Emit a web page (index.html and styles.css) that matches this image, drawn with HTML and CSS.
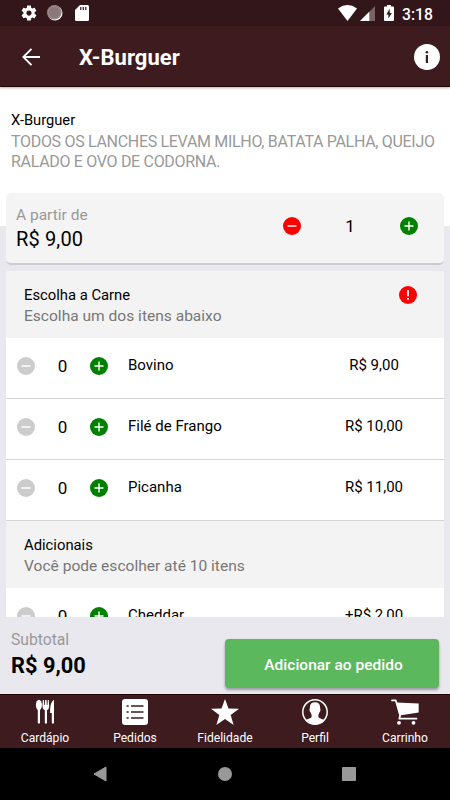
FILE: index.html
```
<!DOCTYPE html>
<html lang="pt-BR">
<head>
<meta charset="utf-8">
<meta name="viewport" content="width=device-width, initial-scale=1">
<title>X-Burguer</title>
<link rel="stylesheet" href="styles.css">
</head>
<body>
<svg class="defs" width="0" height="0" aria-hidden="true">
  <symbol id="minus" viewBox="0 0 18 18"><circle cx="9" cy="9" r="9" fill="currentColor"/><path d="M4.500 9h9" stroke="#fff" stroke-width="1.400"/></symbol>
  <symbol id="plus" viewBox="0 0 18 18"><circle cx="9" cy="9" r="9" fill="currentColor"/><path d="M4.500 9h9M9 4.500v9" stroke="#fff" stroke-width="1.400"/></symbol>
</svg>
<div class="app">
  <div class="status">
    <svg class="gear" width="18" height="18" viewBox="0 0 24 24" fill="#fff"><path d="M19.430 12.980c.04-.32.07-.64.07-.98s-.03-.66-.07-.98l2.110-1.650c.19-.15.24-.42.12-.64l-2-3.460c-.12-.22-.39-.3-.61-.22l-2.490 1c-.52-.4-1.080-.73-1.690-.98l-.38-2.650C14.460 2.180 14.250 2 14 2h-4c-.25 0-.46.18-.49.42l-.38 2.650c-.61.25-1.170.59-1.690.98l-2.490-1c-.23-.09-.49 0-.61.22l-2 3.460c-.13.22-.07.49.12.64l2.110 1.650c-.04.32-.07.65-.07.98s.03.66.07.98l-2.110 1.650c-.19.15-.24.42-.12.64l2 3.460c.12.22.39.3.61.22l2.490-1c.52.4 1.080.73 1.690.98l.38 2.650c.03.24.24.42.49.42h4c.25 0 .46-.18.49-.42l.38-2.650c.61-.25 1.170-.59 1.690-.98l2.490 1c.23.09.49 0 .61-.22l2-3.460c.12-.22.07-.49-.12-.64l-2.110-1.650zM12 15.500c-1.930 0-3.500-1.570-3.500-3.500s1.570-3.500 3.500-3.500 3.500 1.570 3.500 3.500-1.570 3.500-3.500 3.500z"/></svg>
    <svg class="sync" width="16" height="16" viewBox="0 0 16 16"><circle cx="8" cy="8" r="7.500" fill="#fff"/><circle cx="7.300" cy="7.300" r="7.300" fill="#8a7779"/><circle cx="7.300" cy="7.300" r="6" fill="none" stroke="#b3a7a8" stroke-width="1" stroke-dasharray="1 1"/></svg>
    <svg class="sd" width="14" height="16" viewBox="0 0 14 16"><path d="M5 0h7.500Q14 0 14 1.500v13Q14 16 12.500 16h-11Q0 16 0 14.500V5z" fill="#fff"/><path d="M5.800 2v3M8.300 2v3M10.800 2v3" stroke="#331619" stroke-width="1.200"/></svg>
    <span class="grow"></span>
    <svg class="wifi" width="19" height="16" viewBox="0 0 19 16"><path d="M0 3.400Q9.500-3.400 19 3.400L9.500 16z" fill="#fff"/></svg>
    <svg class="signal" width="15" height="15" viewBox="0 0 15 15"><path d="M0 15L15 0v15z" fill="#7a6164"/><path d="M0 15L9.300 5.700V15z" fill="#fff"/></svg>
    <svg class="battery" width="10" height="16" viewBox="0 0 10 16"><path d="M3 0h4v1.500h2q1 0 1 1V15q0 1-1 1H1q-1 0-1-1V2.500q0-1 1-1h2z" fill="#fff"/><path d="M5.700 3.800L2.300 9.500h2.100v4L7.800 8H5.700z" fill="#331619"/></svg>
    <span class="clock">3:18</span>
  </div>
  <header class="bar">
    <svg class="back" width="18" height="18" viewBox="0 0 18 18" fill="none" stroke="#fff" stroke-width="1.900"><path d="M18 9H1.500M9.500.8L1.300 9l8.200 8.200"/></svg>
    <h1>X-Burguer</h1>
    <svg class="info" width="26" height="26" viewBox="0 0 26 26"><circle cx="13" cy="13" r="13" fill="#fff"/><path d="M12.900 11v8" stroke="#3d1b1f" stroke-width="2.200"/><circle cx="12.900" cy="8.300" r="1.300" fill="#3d1b1f"/></svg>
  </header>
  <main class="scroll">
    <section class="intro">
      <h2>X-Burguer</h2>
      <p>TODOS OS LANCHES LEVAM MILHO, BATATA PALHA, QUEIJO RALADO E OVO DE CODORNA.</p>
    </section>
    <section class="price-card">
      <div><div class="from">A partir de</div><div class="price">R$ 9,00</div></div>
      <div class="stepper main-stepper"><svg class="ic red"><use href="#minus"/></svg><span>1</span><svg class="ic green"><use href="#plus"/></svg></div>
    </section>
    <section class="options">
      <div class="group first">
        <div><h3>Escolha a Carne</h3><p>Escolha um dos itens abaixo</p></div>
        <svg class="alert" width="18" height="18" viewBox="0 0 18 18"><circle cx="9" cy="9" r="9" fill="#f00"/><path d="M9 4v6.200M9 11.900v1.800" stroke="#fff" stroke-width="1.800"/></svg>
      </div>
      <div class="row"><div class="stepper"><svg class="ic off"><use href="#minus"/></svg><span>0</span><svg class="ic green"><use href="#plus"/></svg></div><span class="name">Bovino</span><span class="cost">R$ 9,00</span></div>
      <div class="row"><div class="stepper"><svg class="ic off"><use href="#minus"/></svg><span>0</span><svg class="ic green"><use href="#plus"/></svg></div><span class="name">Filé de Frango</span><span class="cost">R$ 10,00</span></div>
      <div class="row"><div class="stepper"><svg class="ic off"><use href="#minus"/></svg><span>0</span><svg class="ic green"><use href="#plus"/></svg></div><span class="name">Picanha</span><span class="cost">R$ 11,00</span></div>
      <div class="group">
        <div><h3>Adicionais</h3><p>Você pode escolher até 10 itens</p></div>
      </div>
      <div class="row"><div class="stepper"><svg class="ic off"><use href="#minus"/></svg><span>0</span><svg class="ic green"><use href="#plus"/></svg></div><span class="name">Cheddar</span><span class="cost">+R$ 2,00</span></div>
    </section>
  </main>
  <section class="subtotal">
    <div class="sum"><div class="label">Subtotal</div><div class="total">R$ 9,00</div></div>
    <button class="add">Adicionar ao pedido</button>
  </section>
  <nav class="tabs">
    <a><svg width="26" height="26" viewBox="0 0 26 26" fill="#fff"><ellipse cx="6.900" cy="6" rx="3" ry="5.200"/><path d="M5.800 9h2.200v15q-1.100 1.500-2.200 0z"/><path d="M10.800 1h1l.4 5h.6l.3-5h1.400l.3 5h.6l.4-5h1l.4 6q0 3.300-2.200 4.200V24q-1.100 1.500-2.200 0V11.200q-2.400-.9-2.400-4.200z"/><path d="M22 .8V24q-1.100 1.500-2.200 0V14h-1.700Q17.700 3 22 .8z"/></svg><span>Cardápio</span></a>
    <a><svg width="26" height="26" viewBox="0 0 26 26"><rect width="26" height="26" rx="3" fill="#fff"/><g stroke="#3d1b1f" stroke-width="1.500"><path d="M9 7h12.500M9 13h12.500M9 19h12.500M4.500 7h2.200M4.500 13h2.200M4.500 19h2.200"/></g></svg><span>Pedidos</span></a>
    <a><svg width="28" height="26" viewBox="0 0 28 26" fill="#fff"><path d="M14 0l3.500 9.500L28 9.800l-8.300 6.300L22.600 26 14 20l-8.600 6 2.900-9.900L0 9.800l10.500-.3z"/></svg><span>Fidelidade</span></a>
    <a><svg width="26" height="26" viewBox="0 0 26 26"><circle cx="13" cy="13" r="12.200" fill="none" stroke="#fff" stroke-width="1.500"/><path d="M13 3.300c3.500 0 5.200 2 5.100 5.300 0 1.200.5 1.400.3 2.800-.2 1.200-.8 1.300-1 2.100-.3 1.200-.7 1.700-1 2.300v2.400c1.300 1.300 4 1.600 5.600 2.800A12 12 0 0 1 4 21c1.600-1.200 4.300-1.500 5.600-2.800v-2.400c-.3-.6-.7-1.100-1-2.300-.2-.8-.8-.9-1-2.100-.2-1.400.3-1.600.3-2.800C7.800 5.300 9.500 3.300 13 3.300z" fill="#fff"/></svg><span>Perfil</span></a>
    <a><svg width="28" height="26" viewBox="0 0 28 26"><path d="M1 1.400h3.800L9.100 16.500l-.8 3.200h17.200" fill="none" stroke="#fff" stroke-width="1.700" stroke-linejoin="round" stroke-linecap="round"/><path d="M5.300 3.500L27.700 4.400v9L8.500 16.500z" fill="#fff"/><circle cx="8" cy="23.800" r="1.900" fill="#fff"/><circle cx="22.500" cy="23.800" r="1.900" fill="#fff"/></svg><span>Carrinho</span></a>
  </nav>
  <div class="sysnav">
    <svg width="15" height="16" viewBox="0 0 15 16"><path d="M1 8L13 1v14z" fill="#999" stroke="#999" stroke-linejoin="round"/></svg>
    <svg width="14" height="14" viewBox="0 0 14 14"><circle cx="7" cy="7" r="7" fill="#999"/></svg>
    <svg width="14" height="14" viewBox="0 0 14 14"><rect width="14" height="14" rx="1" fill="#999"/></svg>
  </div>
</div>
</body>
</html>
```
FILE: styles.css
```
* { box-sizing: border-box; margin: 0; padding: 0; }
body { font-family: Roboto, "Liberation Sans", sans-serif; color: #000; }
svg { display: block; flex: none; }
.defs { position: absolute; }
.app { width: 450px; height: 800px; display: flex; flex-direction: column; overflow: hidden; background: #e9e8ef; }
.grow { flex: 1; }
.status { height: 26px; flex: none; background: #331619; color: #fff; display: flex; align-items: center; padding: 0 17px 0 20px; }
.sync { margin-left: 9px; }
.sd { margin-left: 12px; }
.signal { margin: 1px 0 0 3px; }
.battery { margin-left: 9px; }
.clock { font-size: 15.700px; font-weight: 500; line-height: 18px; margin: 3px 0 0 8px; width: 31px; white-space: nowrap; }
.bar { height: 61px; flex: none; background: #3d1b1f; border-bottom: 1px solid #280507; box-shadow: 0 1px 2px rgba(0,0,0,.3); position: relative; z-index: 1; display: flex; align-items: center; padding: 1px 10px 0 22px; }
.bar h1 { color: #fff; font-size: 22px; letter-spacing: .05px; font-weight: 700; line-height: 28px; margin: 3px 0 0 39px; flex: 1; }
.scroll { height: 530px; flex: none; overflow: hidden; background: linear-gradient(#fff 139px, #e9e8ef 139px); padding: 0 6px; }
.intro { height: 106px; padding: 23px 0 0 5px; }
h2 { font-size: 14.700px; line-height: 21px; font-weight: 400; }
.intro p { font-size: 16px; letter-spacing: -.31px; line-height: 20px; margin-top: 1px; color: #999; width: 432px; }
.price-card { height: 72px; background: #f4f4f4; border-bottom: 2px solid #ccc; border-radius: 5px; display: flex; justify-content: space-between; padding: 11px 26.500px 0 10px; }
.from { font-size: 15.500px; line-height: 22px; color: #999; }
.price { font-size: 20px; letter-spacing: .15px; line-height: 26px; }
.stepper { display: flex; align-items: center; justify-content: space-between; width: 91px; font-size: 17px; }
.main-stepper { width: 135px; height: 44px; }
.ic { width: 18px; height: 18px; }
.red { color: #f00; }
.green { color: #008000; }
.off { color: #ccc; }
.options { margin-top: 6px; background: #fff; border-radius: 3px 3px 0 0; overflow: hidden; }
.group { height: 67px; background: #f3f3f3; display: flex; justify-content: space-between; padding: 14px 27.500px 0 18px; }
h3 { font-size: 14.800px; line-height: 20px; font-weight: 400; }
.group p { font-size: 15.550px; line-height: 21px; margin-top: 1px; color: #777; }
.alert { margin-top: 1px; }
.row { height: 61px; border-bottom: 1px solid #d4d4d4; display: flex; align-items: center; padding: 0 20px 5px 11px; font-size: 15px; }
.name { margin: -1px 0 0 20px; flex: 1; line-height: 20px; }
.cost { width: 100px; margin-top: -1px; text-align: center; line-height: 20px; }
.subtotal { height: 77px; flex: none; display: flex; justify-content: space-between; padding: 12px 11px 0 11px; }
.label { font-size: 15.700px; line-height: 22px; color: #999; }
.total { font-size: 21.800px; line-height: 28px; margin-top: 1px; font-weight: 700; }
.add { width: 214px; height: 49px; margin-top: 10px; padding: 2px 0 0 3px; border: 0; border-radius: 4px; background: #5cb85c; color: #fff; font: 500 15.500px/20px Roboto, sans-serif; box-shadow: 0 2px 3px rgba(0,0,0,.35); }
.tabs { height: 54px; flex: none; background: #3d1b1f; border-top: 1px solid #240407; display: grid; grid-template-columns: repeat(5, 90px); }
.tabs a { display: flex; flex-direction: column; align-items: center; padding-top: 4px; color: #fff; font-size: 12.100px; line-height: 16px; }
.tabs span { margin-top: 5px; }
.sysnav { flex: 1; background: #000; display: flex; justify-content: center; align-items: center; gap: 110px; padding-right: 1px; }
```
